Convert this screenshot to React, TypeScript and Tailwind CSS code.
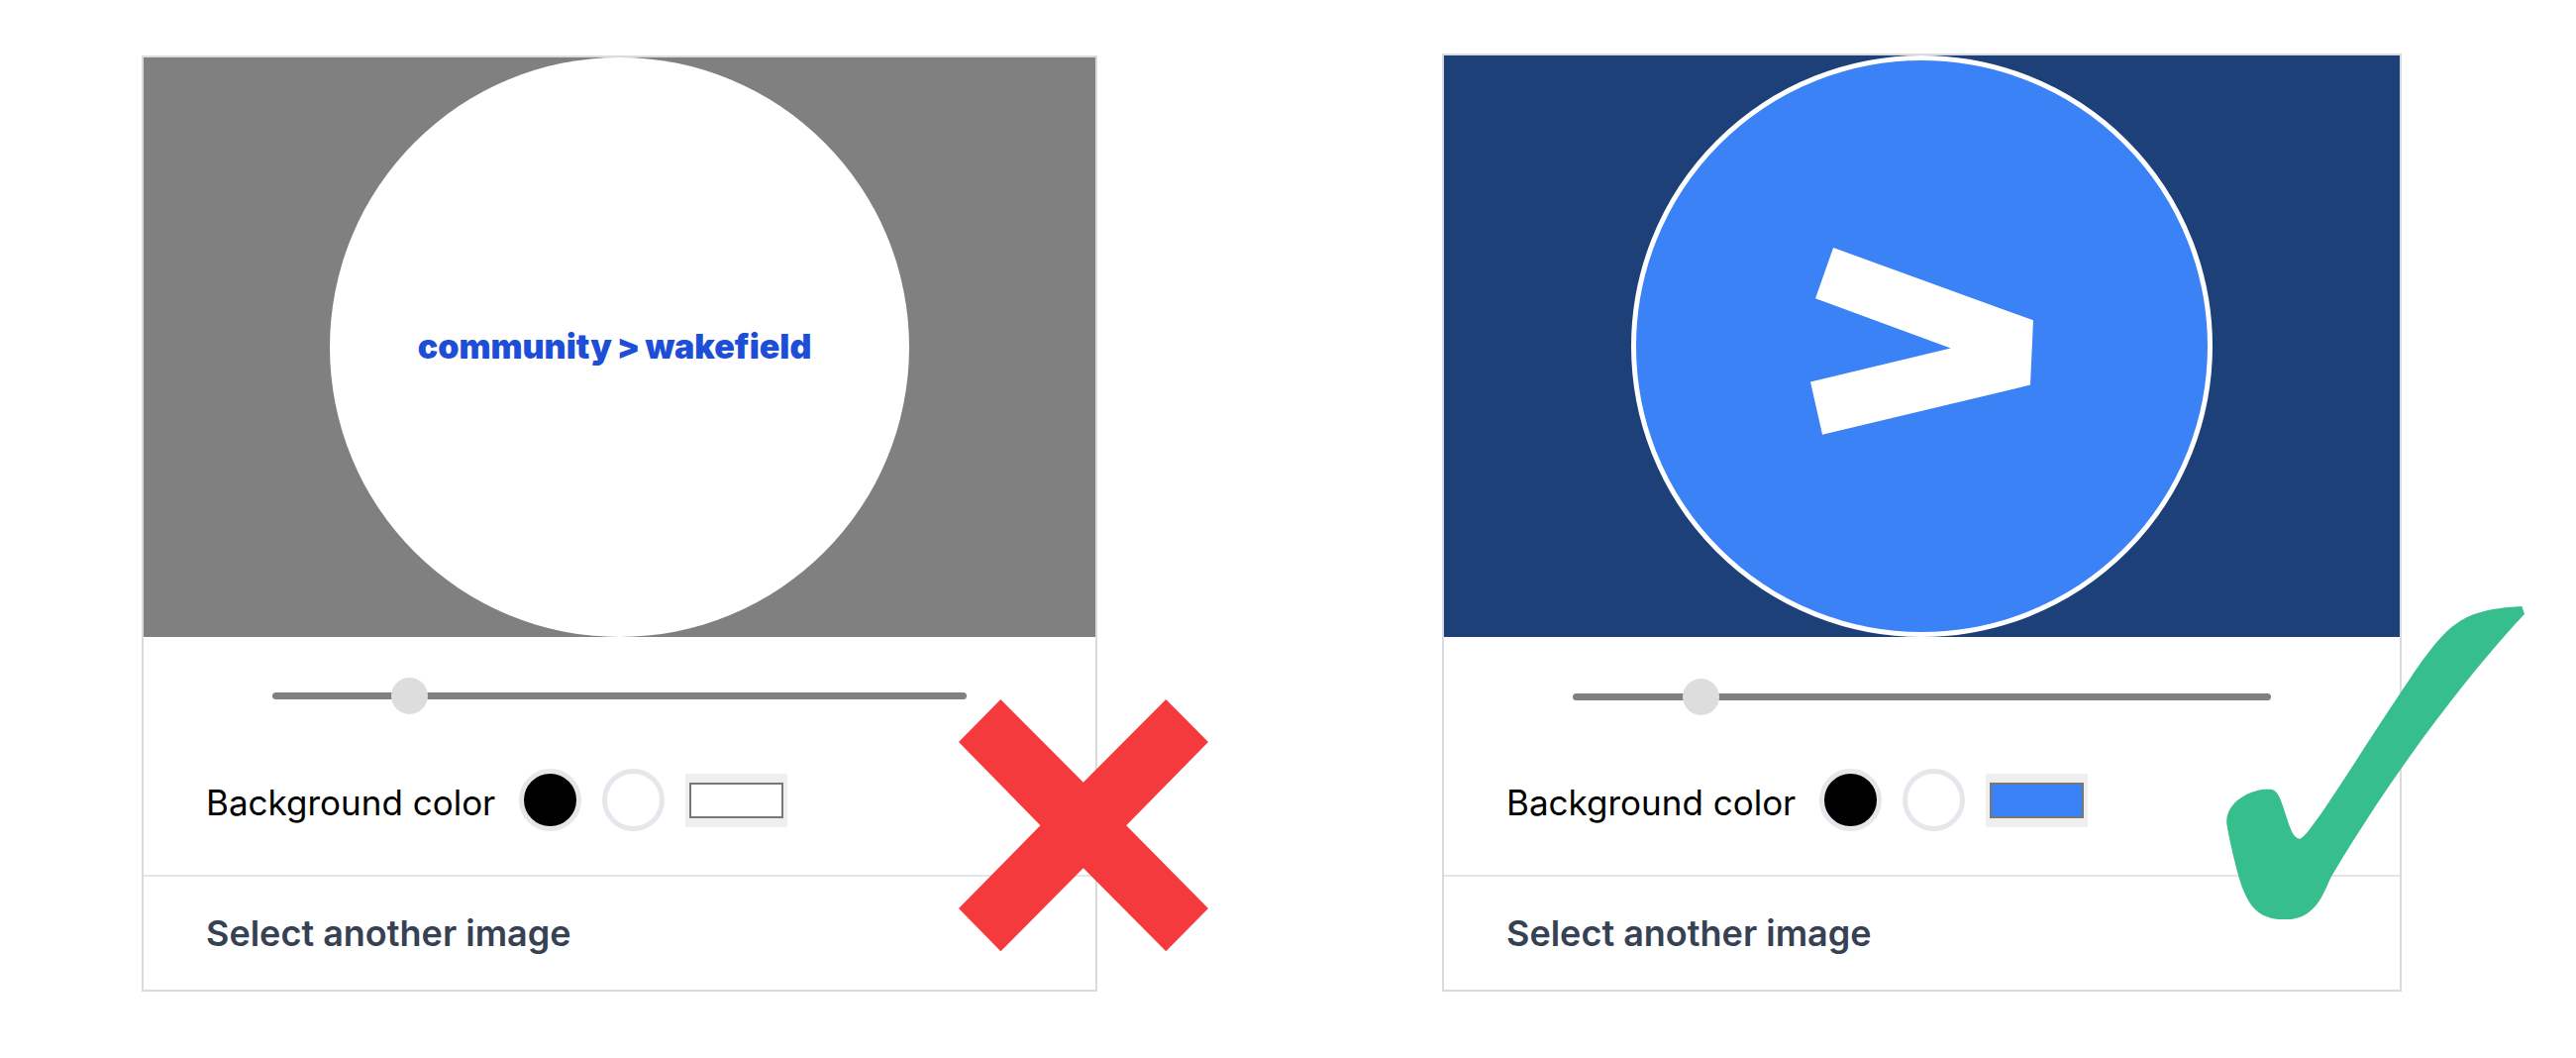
import { useState, type ReactNode } from "react";

type CropCardProps = {
  id: string;
  stageClass: string;
  discClass: string;
  zoom: number;
  color: string;
  logo: ReactNode;
  verdict: ReactNode;
};

function CropCard({ id, stageClass, discClass, zoom, color, logo, verdict }: CropCardProps) {
  const [level, setLevel] = useState(zoom);
  const [background, setBackground] = useState(color);

  return (
    <section className="relative border-2 border-[#d9dbde] bg-white">
      <div className={`flex aspect-[965/587] justify-center ${stageClass}`}>
        <div className={`flex aspect-square h-full items-center justify-center rounded-full ${discClass}`}>{logo}</div>
      </div>

      <div className="flex h-[120px] items-center px-[130px]">
        <input
          type="range"
          aria-label="Zoom"
          min={0}
          max={1000}
          value={level}
          onChange={(e) => setLevel(Number(e.target.value))}
          className="h-[7px] w-full appearance-none rounded-sm bg-[#808080] [&::-webkit-slider-thumb]:size-[37px] [&::-webkit-slider-thumb]:appearance-none [&::-webkit-slider-thumb]:rounded-full [&::-webkit-slider-thumb]:bg-[#dddddd]"
        />
      </div>

      <div className="flex h-[120px] items-start px-[63px] pt-[13px]">
        <label htmlFor={id} className="mt-1 mr-6 text-[35px] leading-[60px] text-black">
          Background color
        </label>
        <button
          type="button"
          aria-label="Black"
          onClick={() => setBackground("#000000")}
          className="mr-[21px] size-[63px] shrink-0 rounded-full border-[5px] border-gray-200 bg-black"
        />
        <button
          type="button"
          aria-label="White"
          onClick={() => setBackground("#ffffff")}
          className="mr-[21px] size-[63px] shrink-0 rounded-full border-[5px] border-gray-200 bg-white"
        />
        <input
          id={id}
          type="color"
          value={background}
          onChange={(e) => setBackground(e.target.value)}
          className="mt-[5px] h-[54px] w-[103px] shrink-0 appearance-none bg-[#efefef] px-1 py-[9px] [&::-webkit-color-swatch]:rounded-none [&::-webkit-color-swatch]:border-2 [&::-webkit-color-swatch]:border-[#777777] [&::-webkit-color-swatch-wrapper]:p-0"
        />
      </div>

      <button
        type="button"
        className="block w-full border-t-2 border-[#e5e6e8] px-[63px] py-8 text-left text-[36px] leading-[50px] font-semibold text-gray-700"
      >
        Select another image
      </button>

      {verdict}
    </section>
  );
}

function Wordmark() {
  return (
    <div className="flex items-center gap-[5px] pr-2.5 text-[34px] leading-10 font-black whitespace-nowrap text-[#1d4ed8]">
      <span>community</span>
      <span>&gt;</span>
      <span>wakefield</span>
    </div>
  );
}

function BrandMark() {
  return (
    <svg viewBox="0 0 224 188" className="mb-2.5 w-[39%]" aria-hidden="true" fill="#ffffff">
      <path d="M23 0 224 73 221 138 12 188 0 135 141 101 5 51Z" />
    </svg>
  );
}

function RejectedMark() {
  return (
    <svg
      viewBox="0 0 755 762"
      className="pointer-events-none absolute -right-[114px] bottom-[38px] w-[252px]"
      role="img"
      aria-label="Incorrect"
      fill="#f53a3d"
    >
      <path d="M127 0 377 251 627 0 755 129 507 381 755 632 627 762 377 510 127 762 0 632 247 381 0 129Z" />
    </svg>
  );
}

function ApprovedMark() {
  return (
    <svg
      viewBox="0 0 904 950"
      className="pointer-events-none absolute -right-[126px] bottom-[71px] w-[301px]"
      role="img"
      aria-label="Correct"
      fill="#36be8d"
    >
      <path d="M896 0 904 23C700 245 490 530 318 820C298 860 275 950 180 950C110 950 75 925 47 850C32 805 10 715 1 660C-5 590 85 548 140 556C175 562 185 705 223 705C252 700 400 450 560 215C680 40 720 12 896 0Z" />
    </svg>
  );
}

export default function App() {
  return (
    <main className="grid min-h-screen grid-cols-[965fr_969fr] items-start gap-[348px] bg-white pt-[54px] pr-[176px] pb-16 pl-[143px] font-['Inter',sans-serif]">
      <div className="pt-0.5">
        <CropCard
          id="color-rejected"
          stageClass="bg-[#808080]"
          discClass="bg-white"
          zoom={180}
          color="#ffffff"
          logo={<Wordmark />}
          verdict={<RejectedMark />}
        />
      </div>
      <CropCard
        id="color-approved"
        stageClass="bg-[#1d4079]"
        discClass="border-[5px] border-white bg-[#3b82f6]"
        zoom={166}
        color="#3b82f6"
        logo={<BrandMark />}
        verdict={<ApprovedMark />}
      />
    </main>
  );
}
